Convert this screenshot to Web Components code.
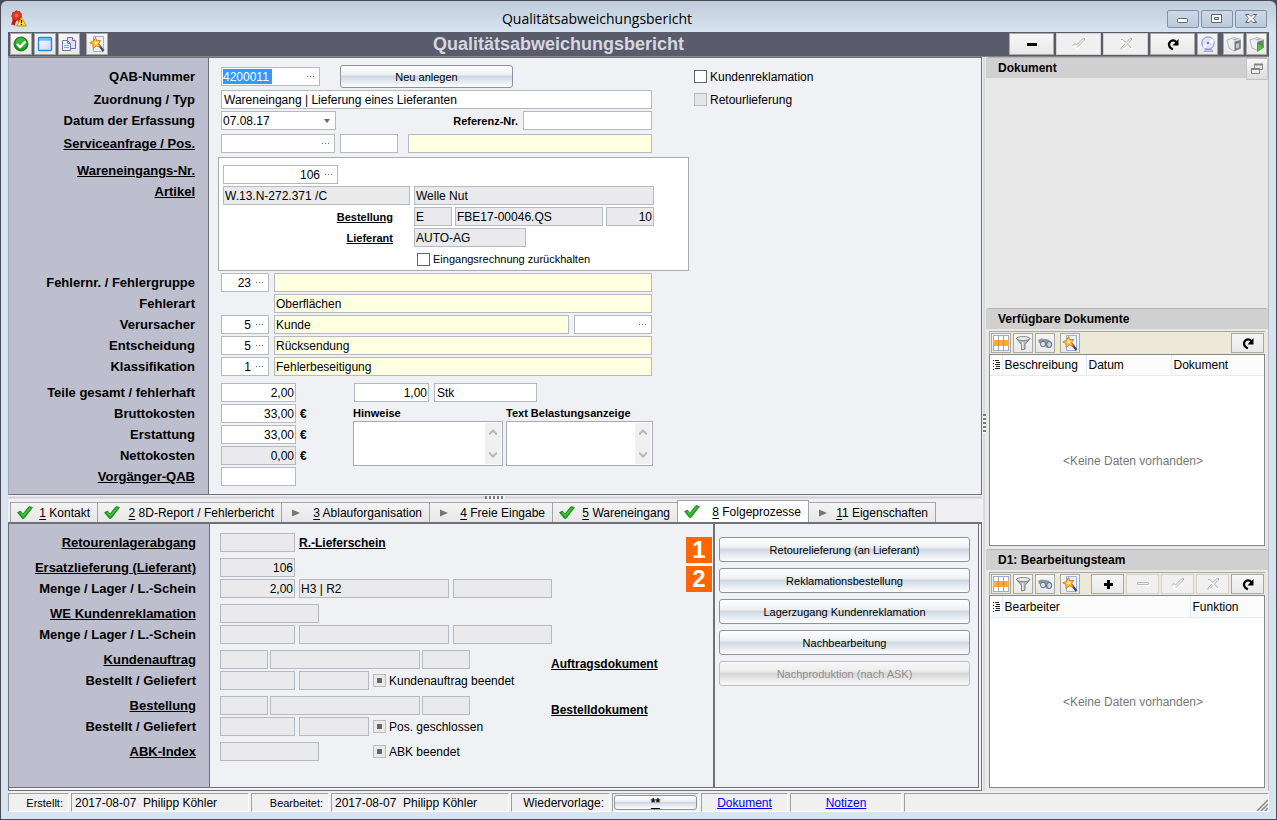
<!DOCTYPE html>
<html lang="de">
<head>
<meta charset="utf-8">
<title>Qualitätsabweichungsbericht</title>
<style>
  html, body { margin: 0; height: 100%; }
  body { background: #4b4b55; font-family: "Liberation Sans", Arial, sans-serif; font-size: 12px; color: #000; }
</style>
</head>
<body>
<app-window heading="Qualitätsabweichungsbericht">
  <main-toolbar heading="Qualitätsabweichungsbericht"></main-toolbar>
  <work-area>
    <report-form></report-form>
    <split-bar></split-bar>
    <tab-strip></tab-strip>
    <follow-up-panel></follow-up-panel>
    <split-bar slot="divider" vertical></split-bar>
    <side-panel slot="side" heading="Dokument" plain></side-panel>
    <side-panel slot="side" heading="Verfügbare Dokumente" columns="Beschreibung:84,Datum:85,Dokument"></side-panel>
    <side-panel slot="side" heading="D1: Bearbeitungsteam" columns="Bearbeiter:188,Funktion" editable></side-panel>
  </work-area>
  <status-bar></status-bar>
</app-window>

<script>
const svg = (w, h, body) => `<svg width="${w}" height="${h}" viewBox="0 0 ${w} ${h}" aria-hidden="true">${body}</svg>`;

const icons = {
  medal: svg(17, 17, `<path d="M3 9L1 15l2-.5L4.500 16 6.500 10zM8 9l1 6 1.500-1L12 15 10 8z" fill="#c81808"/><path d="M6 .5l1.600.9 1.900-.1.700 1.700 1.500 1-.5 1.800.5 1.800-1.600.9-.8 1.700-1.800-.1L5.800 11l-1.400-1.200-1.800-.4-.1-1.900L1.500 6l1-1.500L2.600 2.700l1.900-.4z" fill="#e23214" stroke="#a81204" stroke-width=".6"/><circle cx="6.500" cy="5.500" r="2" fill="#f36a3a"/><path d="M11.500 7.500L16.500 16H6.500z" fill="#ffe02c" stroke="#b08800" stroke-width=".8"/><path d="M11.500 10v3M11.500 14v1.200" stroke="#000" stroke-width="1.200"/>`),
  ok: svg(16, 16, `<circle cx="8" cy="8" r="7" fill="#17911c"/><circle cx="8" cy="7" r="5.500" fill="#3fb63a"/><circle cx="8" cy="8" r="7" fill="none" stroke="#0b6a10" stroke-width=".8"/><path d="M4 8l3 3 5.500-5.500" fill="none" stroke="#fff" stroke-width="2.400"/>`),
  form: svg(16, 16, `<defs><linearGradient id="g" x2="1" y2="1"><stop offset="0" stop-color="#fff"/><stop offset="1" stop-color="#cfd0f4"/></linearGradient></defs><rect x="1.500" y="1.500" width="13" height="13" rx="1" fill="url(#g)" stroke="#1b8df0" stroke-width="1.400"/><path d="M2 2h12v1.500H2z" fill="#69bdfa"/><path d="M2 4h12" stroke="#1b8df0" stroke-width=".8"/>`),
  copy: svg(16, 16, `<path d="M6.500 1.500h5l3 3v8h-8z" fill="#e2dff4" stroke="#7a67ac"/><path d="M11.500 1.500v3h3" fill="#fff" stroke="#7a67ac"/><path d="M1.500 4.500h5l3 3v7h-8z" fill="#eef3fb" stroke="#6b7da6"/><path d="M6.500 4.500v3h3" fill="none" stroke="#6b7da6"/><path d="M3 9.500h5M3 11.500h5" stroke="#8ba2cc"/>`),
  wand: svg(16, 16, `<path d="M4.500.5h10v15h-10z" fill="#eef2ff" stroke="#a0acdc"/><path d="M9 8l5.500 7" stroke="#3f4a5c" stroke-width="2.200"/><path d="M6.500 1.500l1.200 3.300 4-.3L9.500 7.500l1.500 3.700-3.800-1.300L4 12.500l.1-4L.8 6.800l3.500-1.300z" fill="#ffc94a" stroke="#e07a10"/><path d="M6.500 4.500l.8 1.500 1.500.3-1 1.200-1.800.8z" fill="#fff2b8"/>`),
  minus: svg(16, 16, `<path d="M3 7h10v3H3z"/>`),
  plus: svg(16, 16, `<path d="M7 4h3v3h3v3h-3v3H7v-3H4V7h3z"/>`),
  minusOff: svg(16, 16, `<path d="M3 9.500h11.500V6" fill="none" stroke="#fff"/><path d="M2.500 6.500h11v2h-11z" fill="#f4f4f4" stroke="#b8b8b8"/>`),
  tickOff: svg(16, 16, `<path d="M3 10l2 2 2 1 7-9" fill="none" stroke="#fff" stroke-width="1.500"/><path d="M1.500 9.500L4 7.500l1.500 1.500L12 2.500h1.500V4L6 11.500" fill="none" stroke="#b0b0b0"/>`),
  crossOff: svg(16, 16, `<path d="M4 4.500l4.500 4M14 4l-9 9.500M10 9l4 4" stroke="#fff" stroke-width="1.500"/><path d="M3 3.500h1.500L8 6.500l4-4h1.500V4L9.500 8l3.500 4M7 8l-4 4v1.500M8 9.500l-3 3" fill="none" stroke="#acacac"/>`),
  refresh: svg(16, 16, `<path d="M8 13.200C3.500 12 2.800 7.500 5.800 5.200 7.800 3.800 10 4.500 11.500 6.200" fill="none" stroke="#000" stroke-width="2.200"/><path d="M13.500 3v6.500H7.500z"/>`),
  disc: svg(16, 16, `<path d="M5 13.500h7l1 2H4z" fill="#b9bde8" stroke="#9095c8" stroke-width=".6"/><circle cx="8" cy="7" r="6.200" fill="#e0e3fb" stroke="#8589d0"/><path d="M8 7L12 2.500a6 6 0 0 1 2 4zM8 7l-5 3a6 6 0 0 0 2 2.500z" fill="#fff"/><circle cx="8" cy="7" r="1.200" fill="#6b70bd"/>`),
  cube: svg(16, 16, `<path d="M1 4l7-2.500 6.500 2v9L8 15l-5-3-1-4z" fill="#eceeef" stroke="#a6aaae" stroke-width=".8"/><path d="M8.500 5.500l6-1.500v8.500L8.500 15z" fill="#777b80"/><path d="M10 8l3.200-1v4.500L10 12.500z" fill="#c4c8cb"/><path d="M6 3.500l3-1 3 1-3 1z" fill="#8fc4b8"/>`),
  cubeRun: svg(16, 16, `<path d="M1 4l7-2.500 6.500 2v7L8 14l-5-2-1-4z" fill="#eceeef" stroke="#a6aaae" stroke-width=".8"/><path d="M8.500 5.500l6-1.500v7l-6 3z" fill="#777b80"/><path d="M6 3.500l3-1 3 1-3 1z" fill="#8fc4b8"/><path d="M8.500 7v8.500L15 11z" fill="#45c832" stroke="#2a9a1e" stroke-width=".7"/>`),
  grid: svg(16, 16, `<path d="M0 0h16v16H0z" fill="#fff"/><path d="M0 .5h16M0 15.500h16M.5 0v16M5.500 0v16M10.500 0v16M15.500 0v16" stroke="#a4a8c4"/><path d="M0 5h16v6H0z" fill="#fbab3c"/><path d="M5.500 5v6M10.500 5v6" stroke="#e08c20"/>`),
  funnel: svg(16, 16, `<path d="M1.500 3.500l5 6v5.500l3.500-1V9.500l5-6z" fill="#b2b5b8" stroke="#6a6e72" stroke-width=".8"/><ellipse cx="8.200" cy="3.500" rx="6.700" ry="2" fill="#e8eaeb" stroke="#6e7276" stroke-width=".8"/><path d="M7.800 7v7" stroke="#f2f4f5" stroke-width="1.300"/>`),
  glasses: svg(16, 16, `<path d="M1 5l3-1.500 4.500.5 3 .5 3.500 3.500-1 4-4 1-4.500-4L2 8z" fill="#8e979f"/><ellipse cx="6" cy="9" rx="2.500" ry="2.800" fill="#dfe8ee" stroke="#66707a"/><ellipse cx="12.200" cy="9.500" rx="2.500" ry="3" fill="#bcd8ee" stroke="#5c6874"/>`),
  winMin: svg(14, 12, `<rect x="1.500" y="5.500" width="10" height="4" rx="1" fill="#fff" stroke="#5a6478"/>`),
  winMax: svg(14, 12, `<path d="M1.500 1.500h10v8h-10z" fill="#fff" stroke="#5a6478"/><path d="M4.500 4.500h4v2h-4z" fill="#cfdbe8" stroke="#5a6478"/>`),
  winClose: svg(14, 12, `<path d="M1.500 1.500h3.500L7 3.500l2-2h3.500L9.500 5.500l3 4H9L7 7.500l-2 2H1.500L4.500 5.500z" fill="#fff" stroke="#5a6478"/>`),
  restore: svg(14, 14, `<path d="M4.500 6V2.500h8v5H10" fill="none" stroke="#808488"/><path d="M4 2.500h9" stroke="#808488" stroke-width="2"/><path d="M1.500 7.500h8v4h-8z" fill="#eee" stroke="#808488"/><path d="M1 7h9" stroke="#808488" stroke-width="2"/>`),
  done: svg(16, 16, `<path d="M.5 7.500L3.500 6l2.500 3L12 1.500l3.500 1L7 13.500H5.500z" fill="#1f9c22" stroke="#0e7d14" stroke-width=".7"/><path d="M3.500 7.500l2.700 3.500L13 3" fill="none" stroke="#4cc440" stroke-width="1.400"/>`),
  open: svg(16, 16, `<path d="M4 4.500l8 3.500-8 3.500z" fill="#777"/>`),
  dots: svg(8, 4, `<path d="M0 1h1v1H0zM3 1h1v1H3zM6 1h1v1H6z" fill="#666"/>`),
  caret: svg(8, 4, `<path d="M1 0h6L4 4z" fill="#666"/>`),
  up: svg(8, 6, `<path d="M0 5.500l4-4 4 4" fill="none" stroke="#b8b8b8" stroke-width="2"/>`),
  down: svg(8, 6, `<path d="M0 .5l4 4 4-4" fill="none" stroke="#b8b8b8" stroke-width="2"/>`),
  lines: svg(8, 10, `<path d="M0 0h1v1H0zM0 3h1v1H0zM0 6h1v1H0zM0 9h1v1H0zM2 0h4v1H2zM3 2h4v1H3zM2 4h5v1H2zM3 6h4v1H3zM2 8h5v1H2z" fill="#222"/>`),
  grip: svg(12, 12, `<path d="M1 12L12 1M5 12l7-7M9 12l3-3" stroke="#8a8a8a" stroke-width="1.500"/>`)
};

const define = (name, render) => customElements.define(name, class extends HTMLElement {
  constructor() { super(); this.attachShadow({ mode: 'open' }); }
  connectedCallback() { this.shadowRoot.innerHTML = render(this); }
});

const base = `
  * { box-sizing: border-box; }
  svg { display: block; }
  button, input, select, textarea { font: inherit; color: inherit; margin: 0; border-radius: 0; }
  a { color: inherit; }
`;

const toolStyles = `
  .tool { display: grid; place-items: center; width: 22px; height: 22px; padding: 0; border: 1px solid #a9a9a4; background: linear-gradient(#f6f6f6, #e9e9ea); flex: none; }
  .tool:disabled { border-color: #d2d2d0; background: #f0f0f0; }
`;
const tool = (icon, name, extra = '') => `<button class="tool ${extra}" type="button" aria-label="${name}" ${icon.endsWith('Off') ? 'disabled' : ''}>${icons[icon]}</button>`;

const pushStyles = `
  .push { height: 25px; padding: 0 8px; font-size: 11px; border: 1px solid #8d929e; border-radius: 3px; background: linear-gradient(#fff 0, #eef1f5 40%, #cfd8e2 50%, #dde4eb 65%, #fdfdfe 100%); }
  .push:disabled { color: #8f8f8f; border-color: #bfbfbf; background: linear-gradient(#f8f8f8 0, #ececec 40%, #d6d6d6 50%, #e2e2e2 65%, #f8f8f8 100%); }
`;

const formStyles = base + pushStyles + `
  .form { background: linear-gradient(to right, #bdbfcf 200px, #707078 200px, #707078 201px, #eff1f4 201px); display: flex; flex-direction: column; gap: 2px; }
  .row { display: grid; grid-template-columns: 212px 1fr; }
  .row.mid { margin-top: 2px; }
  .row.wide { margin-top: 5px; }
  .form.low .row.mid { margin-top: 4px; }
  .names { display: flex; flex-direction: column; gap: 2px; font-size: 13px; font-weight: bold; text-align: right; padding-right: 26px; line-height: 19px; align-self: center; white-space: nowrap; }
  .names.top { align-self: start; padding-top: 4px; }
  .names.start { align-self: start; }
  .fields { display: flex; align-items: center; }
  .main { display: flex; align-items: center; width: 431px; margin-right: 42px; gap: 5px; }
  .grow { flex: 1; }
  .f { height: 19px; border: 1px solid #b5b9c0; background: #fff; display: flex; align-items: center; min-width: 0; }
  .f input, .f select { flex: 1; width: 0; min-width: 0; height: 17px; padding: 0 1px; border: 0; outline: 0; background: none; appearance: none; }
  .f select { padding: 0 2px; }
  .f.num input { text-align: right; }
  .f.hint { background: #ffffe1; }
  .f.ro { background: #eaeaec; }
  .f button { width: 16px; height: 17px; padding: 0; border: 0; background: none; display: grid; place-items: center; }
  .mark input { color: #fff; background: linear-gradient(#39f, #39f) 1px 1px / 49px 15px no-repeat; }
  .check { display: flex; align-items: center; gap: 3px; white-space: nowrap; }
  .check input { appearance: none; width: 13px; height: 13px; border: 1px solid #666; background: #fff; }
  .check input:disabled { border-color: #bbb; background: #e4e4e6; }
  .check input.set { background: linear-gradient(#666, #666) center / 5px 5px no-repeat #e9e9eb; }
  .small { font-size: 11px; }
  .bold { font-weight: bold; white-space: nowrap; }
`;
let serial = 0;
const field = (id, name, w, value = '', kind = '', button = '') =>
  `<span class="f ${kind}" style="${w ? `width:${w}px` : 'flex:1'}"><input id="${id}" aria-label="${name}" value="${value}" ${/ro|hint/.test(kind) ? 'readonly' : ''}>${button ? `<button type="button" aria-label="${name} auswählen">${icons[button]}</button>` : ''}</span>`;
const pick = (id, name, w, value) => `<span class="f" style="width:${w}px"><select id="${id}" aria-label="${name}"><option>${value}</option></select></span>`;
const check = (name, state = '', cls = '') => { const id = 'check' + (++serial); return `<span class="check ${cls}"><input type="checkbox" id="${id}" ${state}><label for="${id}">${name}</label></span>`; };
const label = (id, text, link) => `<label for="${id}">${link ? `<a href="#${id}">${text}</a>` : text}</label>`;
const row = (names, fields, cls = '', namesCls = '') => `<div class="row ${cls}"><div class="names ${namesCls}">${names}</div><div class="fields">${fields}</div></div>`;

define('app-window', el => `<style>${base}
  :host { display: flex; flex-direction: column; min-height: 100vh; box-sizing: border-box; border: 1px solid #4b4b55; border-radius: 7px 7px 0 0; padding: 0 7px 7px; background: linear-gradient(#c0ccda, #d6e3f0 31px, #d7e4f2); }
  header { display: flex; align-items: center; height: 31px; padding-top: 4px; }
  h1 { flex: 1; margin: 0; text-align: center; font: 14px/20px "Open Sans", sans-serif; }
  nav { display: flex; gap: 2px; padding-right: 2px; }
  nav button { width: 32px; height: 18px; padding: 0; display: grid; place-items: center; border: 1px solid #8390ac; border-radius: 2px; background: linear-gradient(#ccd8e5, #bccada); }
  header > svg { margin-left: 2px; }
  </style>
  <header>${icons.medal}<h1>${el.getAttribute('heading')}</h1>
    <nav><button aria-label="Minimieren">${icons.winMin}</button><button aria-label="Maximieren">${icons.winMax}</button><button aria-label="Schließen">${icons.winClose}</button></nav>
  </header><slot></slot>`);

define('main-toolbar', el => `<style>${base}${toolStyles}
  :host { display: flex; align-items: center; gap: 2px; height: 25px; padding: 0 2px; background: #5a5c6c; border-bottom: 1px solid #85858c; box-sizing: border-box; }
  h2 { flex: 1; margin: 0; text-align: center; font-size: 18px; line-height: 22px; color: #d6d7e0; }
  .big { width: 45px; } .apart { margin-left: 4px; }
  .slim { width: 21px; } .slim.apart { margin-left: 3px; }
  </style>
  ${tool('ok', 'Bestätigen')}${tool('form', 'Formular')}${tool('copy', 'Kopieren')}${tool('wand', 'Assistent', 'apart')}
  <h2>${el.getAttribute('heading')}</h2>
  ${tool('minus', 'Löschen', 'big')}${tool('tickOff', 'Speichern', 'big')}${tool('crossOff', 'Verwerfen', 'big')}${tool('refresh', 'Aktualisieren', 'big')}${tool('disc', 'Ablage', 'slim')}${tool('cube', 'Drucken', 'slim apart')}${tool('cubeRun', 'Sofort drucken', 'slim')}`);

define('work-area', () => `<style>
  :host { display: grid; grid-template-columns: minmax(0, 1fr) 4px 283px; flex: 1; }
  .left, .right { display: flex; flex-direction: column; }
  .left { background: #f0f0f2; }
  .right { background: #e8e8e8; border-right: 1px solid #b9bcc0; }
  </style>
  <div class="left"><slot></slot></div><slot name="divider"></slot><div class="right"><slot name="side"></slot></div>`);

define('split-bar', () => `<style>
  :host { display: grid; place-items: center; height: 5px; background: linear-gradient(#fafafa, #d0d0d6, #f6f6f6); }
  :host([vertical]) { height: auto; background: linear-gradient(to right, #fafafa, #d0d0d6, #f2f2f2); }
  i { width: 20px; height: 3px; background: repeating-linear-gradient(to right, #77777c 0 2px, #f4f4f4 2px 4px); }
  :host([vertical]) i { width: 3px; height: 20px; background: repeating-linear-gradient(#77777c 0 2px, #f4f4f4 2px 4px); }
  </style><i></i>`);

define('report-form', () => `<style>${formStyles}
  :host { display: block; }
  .form { border: 1px solid #707078; border-left-color: #a4a6b4; padding: 7px 0 8px; }
  .form { background-origin: border-box; }
  .row .push { width: 173px; height: 23px; margin-left: 15px; }
  .group { width: 471px; margin-left: -3px; padding: 7px 4px 1px; background: #fff; border: 1px solid #a9abb0; display: grid; grid-template-columns: 187px 1fr; gap: 2px 4px; align-items: center; }
  .group .check { height: 20px; padding-left: 3px; grid-column: 2; }
  .group .bold { text-align: right; padding-right: 17px; }
  .set3 { display: flex; gap: 3px; }
  .money { display: grid; grid-template-columns: 75px 53px; gap: 2px 4px; align-items: center; align-self: start; font-weight: bold; }
  .money .f { font-weight: normal; }
  .note { display: grid; grid-template-rows: 17px 45px; width: 150px; align-self: start; margin-right: 3px; line-height: 19px; }
  .note + .note { width: 147px; }
  .area { display: flex; border: 1px solid #a9abb0; background: #fff; }
  .area textarea { flex: 1; width: 0; border: 0; outline: 0; resize: none; padding: 2px; overflow: hidden; }
  .area span { width: 16px; background: #f0f0f0; margin: 1px; display: flex; flex-direction: column; justify-content: space-between; align-items: center; padding: 6px 0; }
  </style>
  <form class="form">
  ${row(label('nr', 'QAB-Nummer'), `<div class="main">${field('nr', 'QAB-Nummer', 99, '4200011', 'mark', 'dots')}<button class="push" type="button">Neu anlegen</button></div>${check('Kundenreklamation')}`)}
  ${row(label('typ', 'Zuordnung / Typ'), `<div class="main">${pick('typ', 'Zuordnung / Typ', 431, 'Wareneingang | Lieferung eines Lieferanten')}</div>${check('Retourlieferung', 'disabled')}`)}
  ${row(label('datum', 'Datum der Erfassung'), `<div class="main">${field('datum', 'Datum der Erfassung', 115, '07.08.17', '', 'caret')}<span class="grow"></span><label class="small bold" for="ref">Referenz-Nr.</label>${field('ref', 'Referenz-Nr.', 129)}</div>`)}
  ${row(label('service', 'Serviceanfrage / Pos.', 1), `<div class="main">${field('service', 'Serviceanfrage', 115, '', '', 'dots')}${field('pos', 'Position', 58)}<span class="grow"></span>${field('servicetext', 'Bezeichnung', 245, '', 'hint')}</div>`, 'mid')}
  ${row(label('we', 'Wareneingangs-Nr.', 1) + label('artikel', 'Artikel', 1), `<div class="group">
      ${field('we', 'Wareneingangs-Nr.', 115, '106', 'num', 'dots')}<span></span>
      ${field('artikel', 'Artikel', 187, 'W.13.N-272.371 /C', 'ro')}${field('artikelname', 'Artikelbezeichnung', 240, 'Welle Nut', 'ro')}
      <label class="small bold" for="best"><a href="#best">Bestellung</a></label><div class="set3">${field('best', 'Bestellart', 38, 'E', 'ro')}${field('bestnr', 'Bestellnummer', 148, 'FBE17-00046.QS', 'ro')}${field('bestpos', 'Bestellposition', 48, '10', 'ro num')}</div>
      <label class="small bold" for="lief"><a href="#lief">Lieferant</a></label>${field('lief', 'Lieferant', 112, 'AUTO-AG', 'ro')}
      ${check('Eingangsrechnung zurückhalten', '', 'small')}</div>`, 'mid', 'top')}
  ${row(label('fehler', 'Fehlernr. / Fehlergruppe'), `<div class="main">${field('fehler', 'Fehlernummer', 48, '23', 'num', 'dots')}${field('gruppe', 'Fehlergruppe', 0, '', 'hint')}</div>`)}
  ${row(label('art', 'Fehlerart'), `<div class="main"><span style="width:48px"></span>${field('art', 'Fehlerart', 0, 'Oberflächen', 'hint')}</div>`)}
  ${row(label('verursacher', 'Verursacher'), `<div class="main">${field('verursacher', 'Verursacher', 48, '5', 'num', 'dots')}${field('kunde', 'Verursacher Text', 0, 'Kunde', 'hint')}${field('kundenr', 'Verursacher Nummer', 78, '', '', 'dots')}</div>`)}
  ${row(label('entscheid', 'Entscheidung'), `<div class="main">${field('entscheid', 'Entscheidung', 48, '5', 'num', 'dots')}${field('entscheidtext', 'Entscheidung Text', 0, 'Rücksendung', 'hint')}</div>`)}
  ${row(label('klasse', 'Klassifikation'), `<div class="main">${field('klasse', 'Klassifikation', 48, '1', 'num', 'dots')}${field('klassetext', 'Klassifikation Text', 0, 'Fehlerbeseitigung', 'hint')}</div>`)}
  ${row(label('teile', 'Teile gesamt / fehlerhaft'), `<div class="main">${field('teile', 'Teile gesamt', 75, '2,00', 'num')}<span style="width:48px"></span>${field('defekt', 'Teile fehlerhaft', 75, '1,00', 'num')}${pick('einheit', 'Einheit', 103, 'Stk')}</div>`, 'wide')}
  ${row(label('brutto', 'Bruttokosten') + label('erst', 'Erstattung') + label('netto', 'Nettokosten') + label('vor', 'Vorgänger-QAB', 1),
    `<div class="money">${field('brutto', 'Bruttokosten', 75, '33,00', 'num')}<span>€</span>${field('erst', 'Erstattung', 75, '33,00', 'num')}<span>€</span>${field('netto', 'Nettokosten', 75, '0,00', 'ro num')}<span>€</span>${field('vor', 'Vorgänger-QAB', 75)}</div>
     <div class="note"><label class="small bold" for="hinweise">Hinweise</label><div class="area"><textarea id="hinweise"></textarea><span>${icons.up}${icons.down}</span></div></div>
     <div class="note"><label class="small bold" for="belastung">Text Belastungsanzeige</label><div class="area"><textarea id="belastung"></textarea><span>${icons.up}${icons.down}</span></div></div>`, '', 'start')}
  </form>`);

define('tab-strip', () => {
  const tabs = [['1', 'Kontakt', 1, 87], ['2', '8D-Report / Fehlerbericht', 1, 184], ['3', 'Ablauforganisation', 0, 148], ['4', 'Freie Eingabe', 0, 123], ['5', 'Wareneingang', 1, 125], ['8', 'Folgeprozesse', 1, 131], ['11', 'Eigenschaften', 0, 127]];
  return `<style>${base}
  :host { display: flex; align-items: flex-end; height: 24px; padding-left: 2px; border-bottom: 2px solid #707078; box-sizing: border-box; }
  button { display: flex; align-items: center; justify-content: space-between; height: 20px; padding: 0 7px 0 6px; border: 1px solid #a4a4a8; border-width: 1px 1px 0 1px; margin-right: -1px; background: linear-gradient(#f4f4f4, #e6e6e8); white-space: nowrap; }
  button[aria-selected=true] { height: 22px; background: #fff; }
  u { text-underline-offset: 2px; }
  </style>` + tabs.map(([n, t, ok, w]) => `<button role="tab" type="button" aria-selected="${n === '8'}" style="min-width:${w + 1}px">${ok ? icons.done : icons.open}<span><u>${n[0]}</u>${n.slice(1)} ${t}</span></button>`).join('');
});

define('follow-up-panel', () => `<style>${formStyles}
  :host { display: flex; flex: 1; padding: 0 2px 2px 0; border: 1px solid #707078; border-width: 0 1px 1px 1px; background: #f4f4f6; }
  .form { flex: 1; padding-top: 9px; border-bottom: 1px solid #707078; }
  .row { grid-template-columns: 211px 1fr; }
  .names { padding-right: 24px; }
  .fields { gap: 4px; }
  .fields.t { gap: 2px; }
  aside { position: relative; width: 266px; padding: 13px 8px 13px 4px; border: 1px solid #707078; border-width: 0 1px 1px 2px; background: #eff1f4; display: flex; flex-direction: column; gap: 6px; }
  ol { position: absolute; left: -29px; top: 13px; margin: 0; padding: 0; list-style: none; display: grid; gap: 3px; }
  li { width: 26px; height: 26px; background: #f60; color: #fff; text-align: center; font-size: 24px; font-weight: bold; line-height: 26px; }
  .doc { height: 19px; line-height: 28px; margin-left: 79px; }
  </style>
  <form class="form low">
  ${row(label('ret', 'Retourenlagerabgang', 1), field('ret', 'Retourenlagerabgang', 75, '', 'ro num') + `<a class="bold" href="#rls">R.-Lieferschein</a>`)}
  ${row(label('ers', 'Ersatzlieferung (Lieferant)', 1), field('ers', 'Ersatzlieferung', 75, '106', 'ro num'), 'mid')}
  ${row(label('m1', 'Menge / Lager / L.-Schein'), field('m1', 'Menge', 75, '2,00', 'ro num') + field('l1', 'Lager', 150, 'H3 | R2', 'ro') + field('s1', 'Lieferschein', 99, '', 'ro'))}
  ${row(label('wek', 'WE Kundenreklamation', 1), field('wek', 'WE Kundenreklamation', 99, '', 'ro'), 'mid')}
  ${row(label('m2', 'Menge / Lager / L.-Schein'), field('m2', 'Menge', 75, '', 'ro num') + field('l2', 'Lager', 150, '', 'ro') + field('s2', 'Lieferschein', 99, '', 'ro'))}
  ${row(label('ka', 'Kundenauftrag', 1), field('ka', 'Auftragsart', 48, '', 'ro') + field('ka2', 'Auftragsnummer', 150, '', 'ro') + field('ka3', 'Auftragsposition', 48, '', 'ro') + `<a class="bold doc" href="#ad">Auftragsdokument</a>`, 'mid').replace('class="fields"', 'class="fields t"')}
  ${row(label('bg1', 'Bestellt / Geliefert'), field('bg1', 'Bestellt', 75, '', 'ro') + field('bg2', 'Geliefert', 70, '', 'ro') + check('Kundenauftrag beendet', 'disabled class="set"'))}
  ${row(label('be', 'Bestellung', 1), field('be', 'Bestellart', 48, '', 'ro') + field('be2', 'Bestellnummer', 150, '', 'ro') + field('be3', 'Bestellposition', 48, '', 'ro') + `<a class="bold doc" href="#bd">Bestelldokument</a>`, 'mid').replace('class="fields"', 'class="fields t"')}
  ${row(label('bg3', 'Bestellt / Geliefert'), field('bg3', 'Bestellt', 75, '', 'ro') + field('bg4', 'Geliefert', 70, '', 'ro') + check('Pos. geschlossen', 'disabled class="set"'))}
  ${row(label('abk', 'ABK-Index', 1), field('abk', 'ABK-Index', 99, '', 'ro') + `<span style="width:46px"></span>` + check('ABK beendet', 'disabled class="set"'), 'mid')}
  </form>
  <aside><ol><li>1</li><li>2</li></ol>
    <button class="push" type="button">Retourelieferung (an Lieferant)</button>
    <button class="push" type="button">Reklamationsbestellung</button>
    <button class="push" type="button">Lagerzugang Kundenreklamation</button>
    <button class="push" type="button">Nachbearbeitung</button>
    <button class="push" type="button" disabled>Nachproduktion (nach ASK)</button>
  </aside>`);

define('side-panel', el => {
  const plain = el.hasAttribute('plain');
  const cols = (el.getAttribute('columns') || '').split(',').map(c => c.split(':'));
  const edit = el.hasAttribute('editable');
  return `<style>${base}${toolStyles}
  :host { display: flex; flex-direction: column; flex: 242 1 0; }
  :host([plain]) { flex-grow: 251; }
  header { display: flex; justify-content: space-between; align-items: center; height: 21px; padding-left: 12px; background: #d0d0d0; border-top: 1px solid #b4b4b4; border-radius: 3px 3px 0 0; }
  h3 { margin: 0; font-size: 12px; }
  header button { width: 22px; height: 22px; align-self: flex-start; padding: 0; display: grid; place-items: center; border: 1px solid #c4c4c4; background: linear-gradient(#f6f6f6, #ddd); }
  .bar { display: flex; gap: 2px; align-items: center; height: 23px; margin: 2px 3px 0; padding: 0 1px; background: #ece9d8; border: 1px solid #aaa; border-width: 1px 0 0 1px; }
  .tool { width: 20px; height: 20px; } .big { width: 33px; } .apart { margin-left: 3px; } .grow { flex: 1; }
  .box { flex: 1; display: flex; margin: 0 3px 3px; background: #fff; border: 1px solid #84888e; }
  table { flex: 1; border-collapse: collapse; table-layout: fixed; }
  th { height: 21px; padding: 0 2px; font-weight: normal; text-align: left; white-space: nowrap; background: #fcfcfd; border-right: 1px solid #e2ecf8; border-bottom: 1px solid #e2ecf8; }
  th:last-child { border-right: 0; } th:first-child { width: 12px; padding: 0 0 0 3px; }
  td { padding: 0; text-align: center; color: #777; }
  </style>
  <header><h3>${el.getAttribute('heading')}</h3>${plain ? `<button type="button" aria-label="Abdocken">${icons.restore}</button>` : ''}</header>
  ${plain ? '' : `<div class="bar">${tool('grid', 'Spalten')}${tool('funnel', 'Filtern')}${tool('glasses', 'Suchen')}${tool('wand', 'Assistent', 'apart')}<span class="grow"></span>${edit ? tool('plus', 'Hinzufügen', 'big') + tool('minusOff', 'Entfernen', 'big') + tool('tickOff', 'Speichern', 'big') + tool('crossOff', 'Verwerfen', 'big') : ''}${tool('refresh', 'Aktualisieren', 'big')}</div>
  <div class="box"><table><thead><tr><th aria-label="Auswahl">${icons.lines}</th>${cols.map(([t, w]) => `<th ${w ? `style="width:${w}px"` : ''}>${t}</th>`).join('')}</tr></thead><tbody><tr><td></td><td colspan="${cols.length}">&lt;Keine Daten vorhanden&gt;</td></tr></tbody></table></div>`}`;
});

define('status-bar', () => `<style>${base}${pushStyles}
  :host { display: flex; gap: 2px; height: 21px; padding-top: 2px; background: #f0f0f0; box-sizing: border-box; }
  div { border: 1px solid #a0a0a0; border-color: #a0a0a0 #fff #fff #a0a0a0; padding: 0 3px; line-height: 18px; white-space: pre; flex: none; }
  .name { font-size: 11px; text-align: right; padding-right: 5px; }
  .who { width: 178px; } .link { text-align: center; color: #00e; }
  .last { flex: 1; display: flex; justify-content: flex-end; align-items: flex-end; padding: 0; }
  .push { display: block; width: 100%; height: 15px; font-size: 12px; line-height: 12px; padding: 0; font-weight: bold; text-decoration: underline; }
  </style>
  <div class="name" style="width:61px">Erstellt:</div><div class="who">2017-08-07  Philipp Köhler</div>
  <div class="name" style="width:78px">Bearbeitet:</div><div class="who">2017-08-07  Philipp Köhler</div>
  <div class="name" style="width:99px;font-size:12px">Wiedervorlage:</div><div style="width:87px;padding:1px"><button class="push" type="button">**</button></div>
  <div class="link" style="width:87px"><a href="#dokument">Dokument</a></div><div class="link" style="width:112px"><a href="#notizen">Notizen</a></div>
  <div class="last">${icons.grip}</div>`);
</script>
</body>
</html>
